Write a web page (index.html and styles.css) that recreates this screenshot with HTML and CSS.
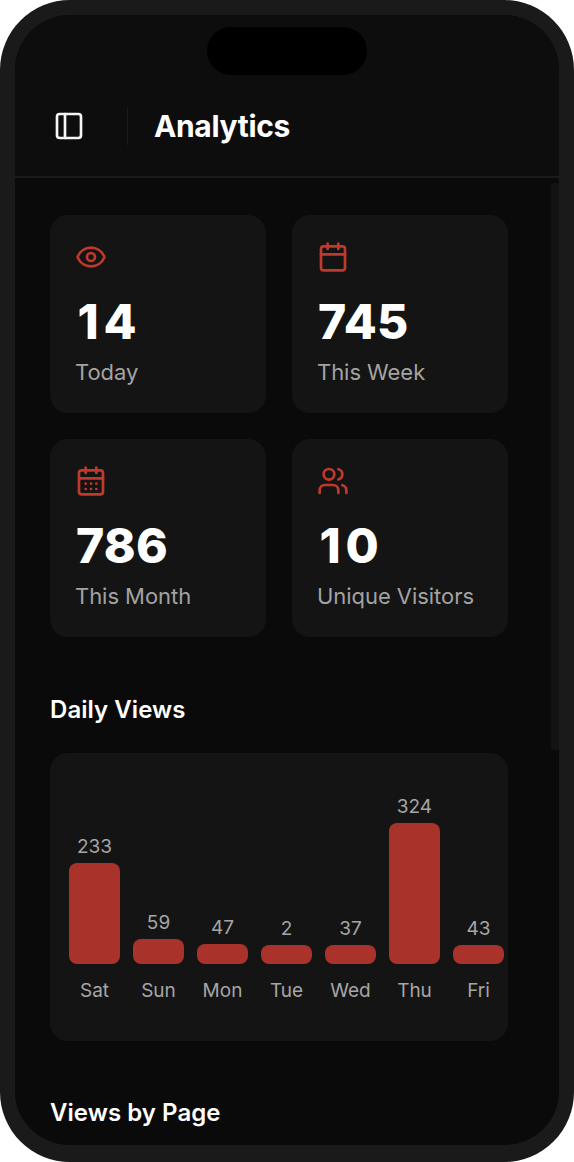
FILE: index.html
```html
<!DOCTYPE html>
<html lang="en">
<head>
<meta charset="utf-8">
<title>Analytics</title>
<link rel="stylesheet" href="styles.css">
</head>
<body>
<div class="phone">
  <div class="notch"></div>
  <header class="topbar">
    <button class="menu-btn" aria-label="Toggle sidebar">
      <svg class="icon-white" viewBox="0 0 24 24"><rect x="3" y="3" width="18" height="18" rx="2"/><path d="M9 3v18"/></svg>
    </button>
    <span class="divider"></span>
    <h1 class="title">Analytics</h1>
  </header>
  <main class="content">
    <section class="stats">
      <article class="card">
        <svg class="icon" viewBox="0 0 24 24"><path d="M2.06 12.35a1 1 0 0 1 0-.7 10.75 10.75 0 0 1 19.88 0 1 1 0 0 1 0 .7 10.75 10.75 0 0 1-19.88 0"/><circle cx="12" cy="12" r="3"/></svg>
        <div class="num"><span class="one">1</span>4</div>
        <div class="label">Today</div>
      </article>
      <article class="card">
        <svg class="icon" viewBox="0 0 24 24"><path d="M8 2v4M16 2v4"/><rect x="3" y="4" width="18" height="18" rx="2"/><path d="M3 10h18"/></svg>
        <div class="num">745</div>
        <div class="label">This Week</div>
      </article>
      <article class="card">
        <svg class="icon" viewBox="0 0 24 24"><path d="M8 2v4M16 2v4"/><rect x="3" y="4" width="18" height="18" rx="2"/><path d="M3 10h18M8 14h.01M12 14h.01M16 14h.01M8 18h.01M12 18h.01M16 18h.01"/></svg>
        <div class="num">786</div>
        <div class="label">This Month</div>
      </article>
      <article class="card">
        <svg class="icon" viewBox="0 0 24 24"><path d="M16 21v-2a4 4 0 0 0-4-4H6a4 4 0 0 0-4 4v2"/><circle cx="9" cy="7" r="4"/><path d="M22 21v-2a4 4 0 0 0-3-3.87M16 3.13a4 4 0 0 1 0 7.75"/></svg>
        <div class="num"><span class="one">1</span>0</div>
        <div class="label">Unique Visitors</div>
      </article>
    </section>
    <h2 class="section">Daily Views</h2>
    <section class="chart">
      <div class="col"><span class="val">233</span><div class="bar" style="height:101px"></div><span class="day">Sat</span></div>
      <div class="col"><span class="val">59</span><div class="bar" style="height:25px"></div><span class="day">Sun</span></div>
      <div class="col"><span class="val">47</span><div class="bar" style="height:20px"></div><span class="day">Mon</span></div>
      <div class="col"><span class="val">2</span><div class="bar" style="height:19px"></div><span class="day">Tue</span></div>
      <div class="col"><span class="val">37</span><div class="bar" style="height:19px"></div><span class="day">Wed</span></div>
      <div class="col"><span class="val">324</span><div class="bar" style="height:141px"></div><span class="day">Thu</span></div>
      <div class="col"><span class="val">43</span><div class="bar" style="height:19px"></div><span class="day">Fri</span></div>
    </section>
    <h2 class="section section-next">Views by Page</h2>
  </main>
  <div class="scrollbar"></div>
</div>
</body>
</html>
```
FILE: styles.css
```css
* { box-sizing: border-box; }
html, body { margin: 0; padding: 0; background: #fff; }
body { font-family: Inter, "Liberation Sans", sans-serif; }
.phone {
  position: relative;
  width: 574px;
  height: 1162px;
  border: solid #1a1a1a;
  border-width: 15px 15px 17px;
  border-radius: 70px;
  background: #0a0a0a;
  overflow: hidden;
}
.notch {
  position: absolute;
  left: 192px;
  top: 12px;
  width: 160px;
  height: 48px;
  border-radius: 24px;
  background: #000;
}
.topbar {
  display: flex;
  align-items: center;
  height: 163px;
  padding: 60px 0 0 40px;
  background: #0d0d0d;
  border-bottom: 2px solid #1b1b1b;
}
.menu-btn {
  display: flex;
  width: 28px;
  height: 28px;
  padding: 0;
  border: 0;
  background: none;
}
.icon-white {
  width: 32px;
  height: 32px;
  margin: -2px 0 0 -2.5px;
  flex: none;
  fill: none;
  stroke: #f5f5f5;
  stroke-width: 2;
  stroke-linecap: round;
  stroke-linejoin: round;
}
.divider {
  width: 1px;
  height: 38px;
  margin: 0 27px 0 44px;
  background: #1c1c1c;
}
.title {
  margin: 0 0 0 -1px;
  font-size: 30px;
  line-height: 38px;
  font-weight: 700;
  letter-spacing: -0.35px;
  color: #fff;
}
.content { padding: 37px 0 0 35px; }
.stats {
  display: grid;
  grid-template-columns: 216px 216px;
  gap: 26px;
}
.card {
  height: 198px;
  padding: 26px 25px 0;
  border-radius: 18px;
  background: #141414;
}
.icon {
  display: block;
  width: 32px;
  height: 32px;
  fill: none;
  stroke: #c0392b;
  stroke-width: 2;
  stroke-linecap: round;
  stroke-linejoin: round;
}
.num {
  margin: 22px 0 0 1px;
  font-size: 48px;
  line-height: 54px;
  font-weight: 800;
  letter-spacing: 0.3px;
  color: #fff;
}
.one { margin: 0 4.5px 0 1.5px; }
.label {
  margin-top: 8px;
  font-size: 22px;
  line-height: 30px;
  letter-spacing: -0.05px;
  color: #a3a3a3;
}
.section {
  margin: 56px 0 0;
  font-size: 24px;
  line-height: 34px;
  font-weight: 600;
  letter-spacing: 0.05px;
  color: #fff;
}
.section-next { margin-top: 55px; }
.chart {
  display: flex;
  align-items: flex-end;
  gap: 13px;
  width: 458px;
  height: 288px;
  margin-top: 26px;
  padding: 0 4px 37px 19px;
  border-radius: 18px;
  background: #141414;
}
.col {
  display: flex;
  flex-direction: column;
  align-items: center;
  width: 51px;
}
.val {
  margin-bottom: 4px;
  font-size: 19px;
  line-height: 24px;
  color: #a6a6a6;
}
.bar {
  width: 51px;
  border-radius: 8px;
  background: #a9322a;
}
.day {
  margin-top: 14px;
  font-size: 19px;
  line-height: 26px;
  color: #a6a6a6;
}
.scrollbar {
  position: absolute;
  right: 0;
  top: 168px;
  width: 8px;
  height: 567px;
  border-radius: 4px 0 0 4px;
  background: #131313;
}
```
